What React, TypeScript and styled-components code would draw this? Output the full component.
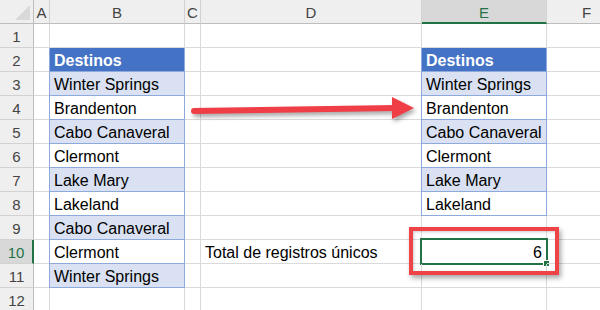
import React from "react";
import styled, { createGlobalStyle, css } from "styled-components";

const GlobalStyle = createGlobalStyle`
  html, body {
    margin: 0;
    padding: 0;
    background: #fff;
    overflow: hidden;
  }
  body {
    font-family: "Liberation Sans", Arial, sans-serif;
  }
`;

const GRID = "#dadada";
const HEAD_LINE = "#bdbdbd";
const TABLE_LINE = "#8ea9db";
const EXCEL_GREEN = "#217346";

const Sheet = styled.div`
  position: relative;
  display: grid;
  grid-template-columns: 34px 16px 135px 16px 221px 125px 80px;
  grid-auto-rows: 24px;
  width: 600px;
  height: 310px;
  overflow: hidden;
  font-size: 16px;
  color: #000;
`;

const Corner = styled.div`
  position: relative;
  background: #efefef;
  border-right: 1px solid ${HEAD_LINE};
  border-bottom: 1px solid ${HEAD_LINE};

  &::after {
    content: "";
    position: absolute;
    right: 3px;
    bottom: 3px;
    width: 15px;
    height: 15px;
    background: #d9d9d9;
    clip-path: polygon(100% 0, 100% 100%, 0 100%);
  }
`;

const ColHead = styled.div<{ $active?: boolean }>`
  box-sizing: border-box;
  padding-top: 2px;
  line-height: 21px;
  font-size: 15px;
  text-align: center;
  background: ${(p) => (p.$active ? "#d8d8d8" : "#efefef")};
  color: ${(p) => (p.$active ? EXCEL_GREEN : "#444")};
  border-right: 1px solid #d2d2d2;
  border-bottom: ${(p) => (p.$active ? `2px solid ${EXCEL_GREEN}` : `1px solid ${HEAD_LINE}`)};
`;

const RowHead = styled.div<{ $active?: boolean }>`
  box-sizing: border-box;
  padding-top: 2px;
  line-height: 21px;
  font-size: 15px;
  text-align: center;
  background: ${(p) => (p.$active ? "#d8d8d8" : "#efefef")};
  color: ${(p) => (p.$active ? EXCEL_GREEN : "#444")};
  border-bottom: 1px solid #d2d2d2;
  border-right: ${(p) => (p.$active ? `2px solid ${EXCEL_GREEN}` : `1px solid ${HEAD_LINE}`)};
`;

type Kind = "plain" | "head" | "band" | "row";

const Cell = styled.div<{ $kind: Kind; $right?: boolean; $selected?: boolean }>`
  position: relative;
  box-sizing: border-box;
  padding: 3px 4px 0;
  line-height: 20px;
  white-space: nowrap;
  text-align: ${(p) => (p.$right ? "right" : "left")};
  border-right: 1px solid ${GRID};
  border-bottom: 1px solid ${GRID};

  ${(p) =>
    p.$kind !== "plain" &&
    css`
      border-right-color: ${TABLE_LINE};
      border-bottom-color: ${TABLE_LINE};
      box-shadow: -1px 0 0 ${TABLE_LINE};
    `}

  ${(p) =>
    p.$kind === "head" &&
    css`
      background: #4472c4;
      color: #fff;
      font-weight: bold;
    `}

  ${(p) =>
    p.$kind === "band" &&
    css`
      background: #d9e1f2;
    `}

  ${(p) =>
    p.$selected &&
    css`
      &::before {
        content: "";
        position: absolute;
        left: -2px;
        top: -2px;
        right: -2px;
        bottom: -2px;
        border: 2px solid ${EXCEL_GREEN};
      }
    `}
`;

const FillHandle = styled.span`
  position: absolute;
  right: -4px;
  bottom: -4px;
  width: 5px;
  height: 5px;
  background: ${EXCEL_GREEN};
  border: 1px solid #fff;
`;

const Callout = styled.div`
  position: absolute;
  left: 409px;
  top: 227px;
  width: 150px;
  height: 48px;
  box-sizing: border-box;
  border: 4px solid #ef4447;
  box-shadow: 2px 3px 5px rgba(0, 0, 0, 0.35), inset 1px 1px 3px rgba(0, 0, 0, 0.2);
  pointer-events: none;
`;

const ArrowLayer = styled.svg`
  position: absolute;
  left: 0;
  top: 0;
  width: 600px;
  height: 310px;
  overflow: visible;
  pointer-events: none;
  filter: drop-shadow(2px 3px 2px rgba(0, 0, 0, 0.35));
`;

const columns = ["A", "B", "C", "D", "E", "F"];

const listB = [
  "Winter Springs",
  "Brandenton",
  "Cabo Canaveral",
  "Clermont",
  "Lake Mary",
  "Lakeland",
  "Cabo Canaveral",
  "Clermont",
  "Winter Springs",
];

const listE = ["Winter Springs", "Brandenton", "Cabo Canaveral", "Clermont", "Lake Mary", "Lakeland"];

function tableCell(list: string[], row: number) {
  // row 2 is the table header, data starts at row 3
  if (row === 2) return { kind: "head" as Kind, text: "Destinos" };
  const i = row - 3;
  if (i >= 0 && i < list.length) {
    return { kind: (i % 2 === 0 ? "band" : "row") as Kind, text: list[i] };
  }
  return { kind: "plain" as Kind, text: "" };
}

export default function App() {
  const rows = Array.from({ length: 12 }, (_, i) => i + 1);

  return (
    <>
      <GlobalStyle />
      <Sheet>
        <Corner />
        {columns.map((c) => (
          <ColHead key={c} $active={c === "E"}>
            {c}
          </ColHead>
        ))}

        {rows.map((r) => {
          const b = tableCell(listB, r);
          const e = tableCell(listE, r);
          const isTotal = r === 10;
          return (
            <React.Fragment key={r}>
              <RowHead $active={isTotal}>{r}</RowHead>
              <Cell $kind="plain" />
              <Cell $kind={b.kind}>{b.text}</Cell>
              <Cell $kind="plain" />
              <Cell $kind="plain">{isTotal ? "Total de registros únicos" : ""}</Cell>
              {isTotal ? (
                <Cell $kind="plain" $right $selected>
                  6
                  <FillHandle />
                </Cell>
              ) : (
                <Cell $kind={e.kind}>{e.text}</Cell>
              )}
              <Cell $kind="plain" />
            </React.Fragment>
          );
        })}

        <ArrowLayer viewBox="0 0 600 310">
          <line x1="194" y1="111" x2="396" y2="108" stroke="#ef3e45" strokeWidth="6" strokeLinecap="round" />
          <polygon points="392,97 414,108 392,119" fill="#ef3e45" />
        </ArrowLayer>
        <Callout />
      </Sheet>
    </>
  );
}
